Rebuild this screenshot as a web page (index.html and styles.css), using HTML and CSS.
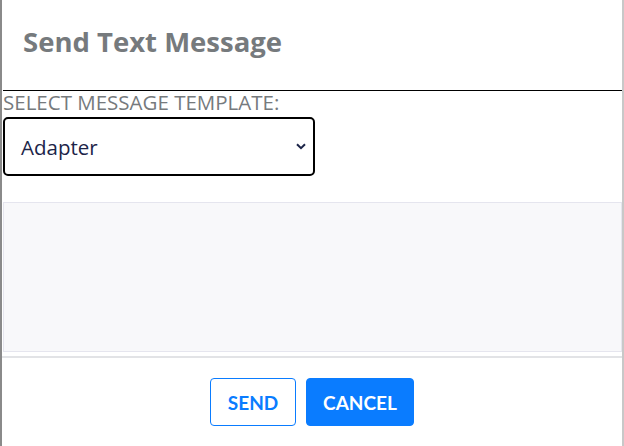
FILE: index.html
```html
<!DOCTYPE html>
<html>
<head>
<meta charset="utf-8">
<link rel="stylesheet" href="styles.css">
</head>
<body>
<div class="modal">
  <div class="modal-header">
    <h2 class="title">Send Text Message</h2>
  </div>
  <div class="modal-body">
    <label class="label" for="tpl">SELECT MESSAGE TEMPLATE:</label>
    <div class="select-wrap">
      <div class="select" id="tpl">
        <span class="select-text">Adapter</span>
        <svg class="chev" width="10" height="7" viewBox="0 0 10 7"><path d="M1 1.2 L5 5.2 L9 1.2" fill="none" stroke="#1c2448" stroke-width="2"/></svg>
      </div>
    </div>
    <div class="textarea"></div>
  </div>
  <div class="modal-footer">
    <button class="btn btn-outline">SEND</button>
    <button class="btn btn-primary">CANCEL</button>
  </div>
</div>
</body>
</html>
```
FILE: styles.css
```css
html, body {
  margin: 0;
  padding: 0;
  background: #ffffff;
}
.modal {
  width: 624px;
  height: 446px;
  box-sizing: border-box;
  border-left: 2px solid #8a8a8a;
  border-right: 2px solid #c8c8c8;
  background: #fff;
  display: flex;
  flex-direction: column;
}
.modal-header {
  margin-left: 1px;
  height: 91px;
  box-sizing: border-box;
  border-bottom: 1px solid #000;
  display: flex;
  align-items: center;
  padding: 0 0 8px 20px;
}
.title {
  margin: 0;
  font-family: "Open Sans", sans-serif;
  font-weight: 700;
  font-size: 27.5px;
  color: #767a7d;
}
.modal-body {
  padding: 0 0 0 1px;
  display: flex;
  flex-direction: column;
}
.label {
  font-family: "Open Sans", sans-serif;
  font-size: 20.5px;
  font-weight: 500;
  line-height: 22px;
  color: #767a7d;
  white-space: nowrap;
}
.select-wrap {
  margin-top: 4px;
}
.select {
  width: 312px;
  height: 59px;
  box-sizing: border-box;
  border: 2px solid #000;
  border-radius: 5px;
  display: flex;
  align-items: center;
  justify-content: space-between;
  padding: 0 7px 0 16px;
}
.select-text {
  font-family: "Open Sans", sans-serif;
  font-size: 20.5px;
  color: #1c2448;
  font-weight: 500;
}
.chev {
  display: block;
}
.textarea {
  margin-top: 26px;
  height: 150px;
  box-sizing: border-box;
  background: #f8f8fa;
  border: 1px solid #e5e5ee;
}
.modal-footer {
  margin-top: 4px;
  border-top: 2px solid #e2e3e6;
  flex: 1;
  display: flex;
  justify-content: center;
  align-items: flex-start;
  gap: 10px;
  padding-top: 20px;
}
.btn {
  height: 48px;
  font-family: Lato, sans-serif;
  font-weight: 700;
  font-size: 19px;
  border-radius: 4px;
  padding: 0;
  cursor: pointer;
}
.btn-outline {
  width: 86px;
  background: #fff;
  color: #0a7cff;
  border: 1px solid #0a7cff;
}
.btn-primary {
  width: 108px;
  background: #0a7cff;
  color: #fff;
  border: 1px solid #0a7cff;
}
```
